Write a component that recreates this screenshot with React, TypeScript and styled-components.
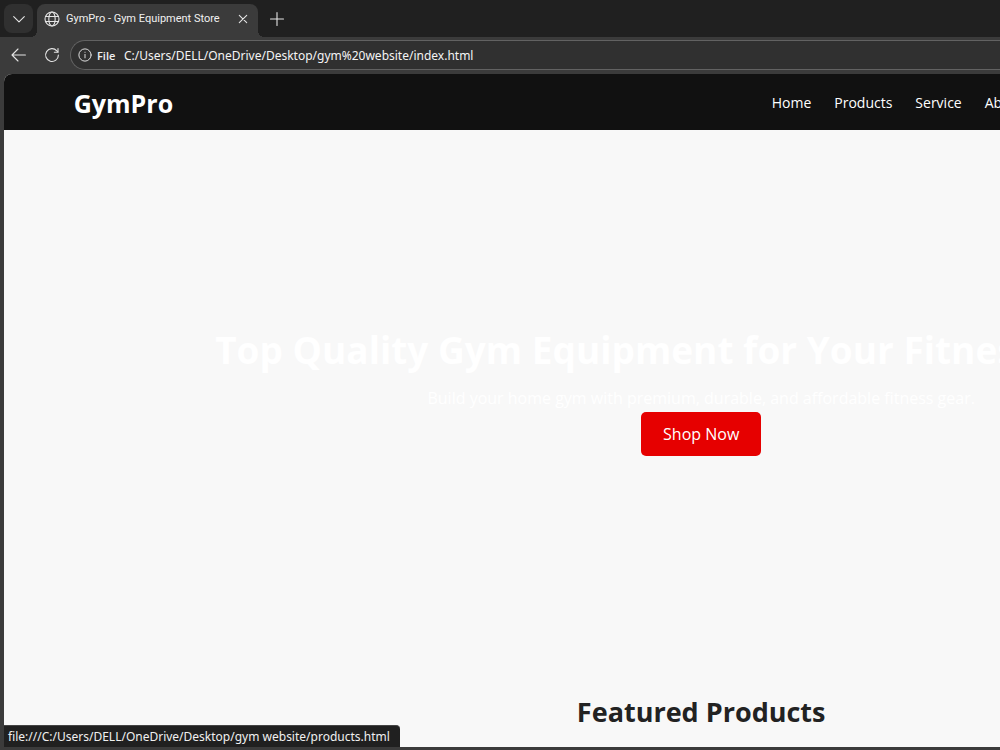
import React from "react";
import styled, { createGlobalStyle } from "styled-components";

const GlobalStyle = createGlobalStyle`
  * { box-sizing: border-box; }
  body {
    margin: 0;
    background: #3b3b3b;
    font-family: "Open Sans", "Noto Sans", sans-serif;
  }
  h1, h2, p { margin: 0; }
  button { font: inherit; color: inherit; border: 0; padding: 0; background: none; }
  a { color: inherit; text-decoration: none; }
`;

const Browser = styled.div`
  display: flex;
  flex-direction: column;
  height: 100vh;
  overflow: hidden;
  background: #3b3b3b;
  color: #f0f0f0;
`;

const TabStrip = styled.div`
  display: flex;
  align-items: flex-end;
  height: 37px;
  flex: none;
  padding-left: 4px;
  background: #202020;
`;

const StripButton = styled.button<{ $filled?: boolean }>`
  display: flex;
  align-items: center;
  justify-content: center;
  width: ${(p) => (p.$filled ? 29 : 37)}px;
  height: ${(p) => (p.$filled ? 29 : 36)}px;
  margin-bottom: ${(p) => (p.$filled ? 4 : 0)}px;
  border-radius: 8px;
  background: ${(p) => (p.$filled ? "#303030" : "transparent")};
`;

const Tab = styled.div`
  display: flex;
  align-items: center;
  position: relative;
  width: 221px;
  height: 33px;
  margin-left: 4px;
  padding: 0 7px 4px 7px;
  border-radius: 8px 8px 0 0;
  background: #3b3b3b;
  font: 11px Roboto, sans-serif;

  &::before,
  &::after {
    content: "";
    position: absolute;
    bottom: 0;
    width: 6px;
    height: 6px;
  }
  &::before {
    right: 100%;
    background: radial-gradient(circle at 0 0, transparent 6px, #3b3b3b 6px);
  }
  &::after {
    left: 100%;
    background: radial-gradient(circle at 100% 0, transparent 6px, #3b3b3b 6px);
  }
`;

const TabTitle = styled.span`
  flex: 1;
  margin-left: 6px;
  white-space: nowrap;
`;

const IconButton = styled.button`
  display: flex;
  align-items: center;
  justify-content: center;
  width: 16px;
  height: 16px;
`;

const Toolbar = styled.div`
  display: flex;
  align-items: center;
  flex: none;
  gap: 17px;
  height: 37px;
  padding: 0 0 1px 11px;
`;

const AddressBar = styled.label`
  display: flex;
  align-items: center;
  flex: 1;
  height: 30px;
  margin-left: -7px;
  padding-left: 7px;
  border: 1px solid #626262;
  border-right: 0;
  border-radius: 15px 0 0 15px;
  background: #303030;
`;

const Scheme = styled.span`
  width: 27px;
  margin-left: 5px;
  font-size: 11px;
  font-weight: 600;
`;

const AddressInput = styled.input`
  flex: 1;
  min-width: 0;
  padding: 0;
  border: 0;
  outline: 0;
  background: transparent;
  color: #f4f4f4;
  font: 12px "Noto Sans", sans-serif;
`;

const Viewport = styled.div`
  position: relative;
  flex: 1;
  min-height: 0;
  margin: 0 0 3px 4px;
  overflow: hidden;
  border-radius: 8px 0 0 0;
  background: #f8f8f8;
`;

const Site = styled.div`
  width: 140%;
`;

const Header = styled.header`
  display: flex;
  align-items: center;
  justify-content: space-between;
  height: 56px;
  padding: 1px 5% 0;
  background: #111;
  color: #fff;
`;

const Logo = styled.div`
  font-size: 25px;
  font-weight: 700;
`;

const Nav = styled.nav`
  display: flex;
  gap: 23px;
  flex: 0 0 557px;
  font-size: 14px;
`;

const Hero = styled.section`
  display: flex;
  flex-direction: column;
  align-items: center;
  justify-content: center;
  height: 520px;
  color: #fff;
`;

const HeroTitle = styled.h1`
  font-size: 37px;
  line-height: 52px;
  white-space: nowrap;
`;

const HeroText = styled.p`
  margin-top: 8px;
  font-size: 16px;
  line-height: 28px;
`;

const ShopLink = styled.a`
  padding: 10px 22px;
  border-radius: 5px;
  background: #e60000;
  font-size: 16px;
  line-height: 24px;
`;

const SectionTitle = styled.h2`
  margin-top: 42px;
  color: #222;
  font-size: 27px;
  line-height: 40px;
  text-align: center;
`;

const StatusBubble = styled.div`
  position: absolute;
  left: 0;
  bottom: 0;
  padding: 0 10px 0 4px;
  border-top: 1px solid #444;
  border-radius: 0 4px 0 0;
  background: #202020;
  color: #f0f0f0;
  font: 12px/21px "Noto Sans", sans-serif;
  white-space: nowrap;
`;

const Icon = ({ size, children }: { size: number; children: React.ReactNode }) => (
  <svg
    width={size}
    height={size}
    viewBox="0 0 16 16"
    fill="none"
    stroke="#e4e4e4"
    strokeWidth="1.1"
    strokeLinecap="round"
    strokeLinejoin="round"
    style={{ flex: "none" }}
    aria-hidden="true"
  >
    {children}
  </svg>
);

const links = [
  ["Home", "index.html"],
  ["Products", "products.html"],
  ["Service", "service.html"],
  ["About", "about.html"],
];

export default function App() {
  return (
    <>
      <GlobalStyle />
      <Browser>
        <TabStrip>
          <StripButton $filled aria-label="Search tabs">
            <Icon size={16}><path d="M2.7 5.6 8 10.8l5.3-5.2" /></Icon>
          </StripButton>
          <Tab>
            <Icon size={16}>
              <circle cx="8" cy="8" r="7" />
              <ellipse cx="8" cy="8" rx="3.2" ry="7" />
              <path d="M1.5 5.5h13M1.5 10.5h13" />
            </Icon>
            <TabTitle>GymPro - Gym Equipment Store</TabTitle>
            <IconButton aria-label="Close tab">
              <Icon size={16}><path d="m4.3 4.3 7.4 7.4m0-7.4-7.4 7.4" /></Icon>
            </IconButton>
          </Tab>
          <StripButton aria-label="New tab">
            <Icon size={16}><path d="M8 1.5v13M1.5 8h13" /></Icon>
          </StripButton>
        </TabStrip>
        <Toolbar>
          <IconButton aria-label="Back">
            <Icon size={16}><path d="M14.4 8H1M7 2 1 8l6 6" /></Icon>
          </IconButton>
          <IconButton aria-label="Refresh">
            <Icon size={16}>
              <path d="M14.4 8A6.4 6.4 0 1 1 12.8 3.8L13.9 5" />
              <path d="M14 1.6V5.2h-3.6" />
            </Icon>
          </IconButton>
          <AddressBar>
            <Icon size={14}>
              <circle cx="8" cy="8" r="7" />
              <path d="M8 7.3v4M8 4.8v.2" />
            </Icon>
            <Scheme>File</Scheme>
            <AddressInput
              aria-label="Address"
              defaultValue="C:/Users/DELL/OneDrive/Desktop/gym%20website/index.html"
            />
          </AddressBar>
        </Toolbar>
        <Viewport>
          <Site>
            <Header>
              <Logo>GymPro</Logo>
              <Nav>
                {links.map(([label, href]) => (
                  <a key={label} href={href}>{label}</a>
                ))}
              </Nav>
            </Header>
            <Hero>
              <HeroTitle>Top Quality Gym Equipment for Your Fitness Journey</HeroTitle>
              <HeroText>Build your home gym with premium, durable, and affordable fitness gear.</HeroText>
              <ShopLink href="products.html">Shop Now</ShopLink>
            </Hero>
            <SectionTitle>Featured Products</SectionTitle>
          </Site>
          <StatusBubble>file:///C:/Users/DELL/OneDrive/Desktop/gym website/products.html</StatusBubble>
        </Viewport>
      </Browser>
    </>
  );
}
